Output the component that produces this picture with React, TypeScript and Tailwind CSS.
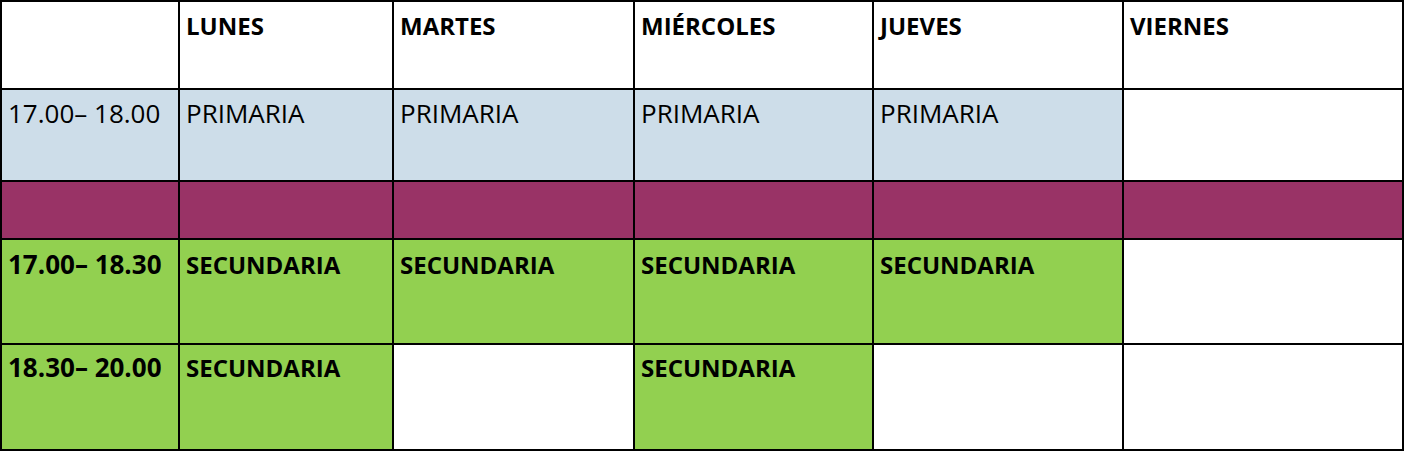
import React from "react";

// Horario semanal: franjas por día
const days = ["LUNES", "MARTES", "MIÉRCOLES", "JUEVES", "VIERNES"];

type Cell = { text?: string; bg: string };

const rows: { label: string; bg: string; style: string; labelStyle: string; height: string; cells: Cell[] }[] = [
    {
        label: "17.00– 18.00",
        bg: "bg-[#cddde9]",
        style: "text-[26px] pt-[8px]",
        labelStyle: "text-[26px] pt-[8px]",
        height: "h-[90px]",
        cells: [
            { text: "PRIMARIA", bg: "bg-[#cddde9]" },
            { text: "PRIMARIA", bg: "bg-[#cddde9]" },
            { text: "PRIMARIA", bg: "bg-[#cddde9]" },
            { text: "PRIMARIA", bg: "bg-[#cddde9]" },
            { bg: "bg-white" },
        ],
    },
    {
        label: "",
        bg: "bg-[#993366]",
        style: "",
        labelStyle: "",
        height: "h-[56px]",
        cells: [
            { bg: "bg-[#993366]" },
            { bg: "bg-[#993366]" },
            { bg: "bg-[#993366]" },
            { bg: "bg-[#993366]" },
            { bg: "bg-[#993366]" },
        ],
    },
    {
        label: "17.00– 18.30",
        bg: "bg-[#92d050]",
        style: "text-[24px] font-bold pt-[10px]",
        labelStyle: "text-[26px] font-bold pt-[9px]",
        height: "h-[103px]",
        cells: [
            { text: "SECUNDARIA", bg: "bg-[#92d050]" },
            { text: "SECUNDARIA", bg: "bg-[#92d050]" },
            { text: "SECUNDARIA", bg: "bg-[#92d050]" },
            { text: "SECUNDARIA", bg: "bg-[#92d050]" },
            { bg: "bg-white" },
        ],
    },
    {
        label: "18.30– 20.00",
        bg: "bg-[#92d050]",
        style: "text-[24px] font-bold pt-[8px]",
        labelStyle: "text-[26px] font-bold pt-[7px]",
        height: "h-[104px]",
        cells: [
            { text: "SECUNDARIA", bg: "bg-[#92d050]" },
            { bg: "bg-white" },
            { text: "SECUNDARIA", bg: "bg-[#92d050]" },
            { bg: "bg-white" },
            { bg: "bg-white" },
        ],
    },
];

export default function App() {
    return (
        <div className="w-[1404px] h-[452px] bg-white font-['Open_Sans',sans-serif] text-black leading-[30px]">
            <div className="grid grid-cols-[176px_212px_239px_237px_248px_278px] gap-[2px] p-[2px] bg-black w-[1404px]">
                {/* Header */}
                <div className="h-[86px] bg-white" />
                {days.map((day) => (
                    <div key={day} className="h-[86px] bg-white px-[6px] pt-[9px] text-[24px] font-bold">
                        {day}
                    </div>
                ))}

                {/* Rows */}
                {rows.map((row, i) => (
                    <React.Fragment key={i}>
                        <div className={`${row.height} ${row.bg} px-[6px] whitespace-nowrap ${row.labelStyle}`}>
                            {row.label}
                        </div>
                        {row.cells.map((cell, j) => (
                            <div key={j} className={`${row.height} ${cell.bg} px-[6px] ${row.style}`}>
                                {cell.text}
                            </div>
                        ))}
                    </React.Fragment>
                ))}
            </div>
        </div>
    );
}
